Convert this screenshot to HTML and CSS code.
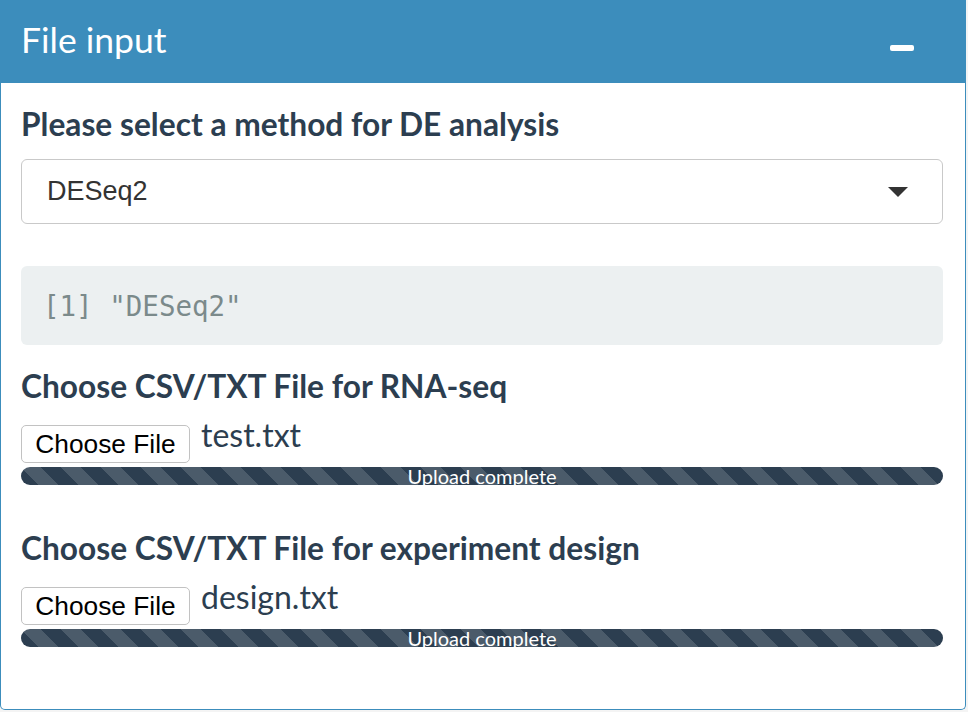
FILE: index.html
```html
<!DOCTYPE html>
<html>
<head>
<meta charset="utf-8">
<title>File input</title>
<link rel="stylesheet" href="styles.css">
</head>
<body>
<div class="box">
  <div class="box-header">
    <h3 class="box-title">File input</h3>
    <button class="box-tool" type="button" aria-label="Collapse"><span class="minus"></span></button>
  </div>
  <div class="box-body">
    <label class="control-label label-method">Please select a method for DE analysis</label>
    <div class="select">
      <span class="select-value">DESeq2</span>
      <span class="select-caret"></span>
    </div>
    <pre class="output">[1] "DESeq2"</pre>

    <div class="file-group">
      <label class="control-label">Choose CSV/TXT File for RNA-seq</label>
      <div class="file-row">
        <button class="file-btn" type="button">Choose File</button>
        <span class="file-name">test.txt</span>
      </div>
      <div class="progress"><div class="progress-bar" style="width:100%">Upload complete</div></div>
    </div>

    <div class="file-group second">
      <label class="control-label">Choose CSV/TXT File for experiment design</label>
      <div class="file-row">
        <button class="file-btn" type="button">Choose File</button>
        <span class="file-name">design.txt</span>
      </div>
      <div class="progress"><div class="progress-bar" style="width:100%">Upload complete</div></div>
    </div>
  </div>
</div>
</body>
</html>
```

FILE: styles.css
```css
* { box-sizing: border-box; }

html, body {
  margin: 0;
  padding: 0;
  background: #f4f4f4;
}

body {
  font-family: Lato, "Open Sans", sans-serif;
  color: #2c3e50;
}

.box {
  width: 966px;
  background: #fff;
  border: 1px solid #3c8dbc;
  border-top: 0;
  border-radius: 0 0 5px 5px;
}

.box-header {
  height: 83px;
  background: #3c8dbc;
  display: flex;
  align-items: center;
  justify-content: space-between;
  padding: 0 51px 0 20px;
}

.box-title {
  margin: -4px 0 0 0;
  font-size: 35.5px;
  font-weight: 400;
  line-height: 42px;
  color: #fff;
}

.box-tool {
  background: none;
  border: 0;
  padding: 0;
  margin: 13px 0 0 0;
  display: flex;
}

.minus {
  display: block;
  width: 24px;
  height: 6px;
  border-radius: 2px;
  background: #fff;
}

.box-body {
  padding: 24px 22px 62px 20px;
}

.control-label {
  display: block;
  font-size: 31.7px;
  font-weight: 700;
  line-height: 35px;
  color: #2c3e50;
  white-space: nowrap;
}

.select {
  margin-top: 17px;
  height: 65px;
  border: 1px solid #c9c9c9;
  border-radius: 6px;
  background: #fff;
  display: flex;
  align-items: center;
  justify-content: space-between;
  padding: 0 34px 0 25px;
}

.select-value {
  font-family: "Liberation Sans", Arial, sans-serif;
  font-size: 27px;
  color: #333;
}

.select-caret {
  width: 0;
  height: 0;
  border-left: 10px solid transparent;
  border-right: 10px solid transparent;
  border-top: 10px solid #333;
}

.output {
  margin: 42px 0 0 0;
  height: 79px;
  background: #ecf0f1;
  border-radius: 6px;
  padding: 0 22px;
  display: flex;
  align-items: center;
  font-family: "DejaVu Sans Mono", "Liberation Mono", monospace;
  font-size: 27.5px;
  color: #7b8a8b;
}

.file-group {
  margin-top: 24px;
}

.file-group.second {
  margin-top: 46px;
}

.file-row {
  margin-top: 21px;
  display: flex;
  align-items: flex-start;
  gap: 11px;
}

.file-btn {
  width: 169px;
  height: 38px;
  padding: 0;
  background: #fff;
  border: 1px solid #c2c2c2;
  border-radius: 5px;
  font-family: "Liberation Sans", Arial, sans-serif;
  font-size: 26.3px;
  color: #000;
}

.file-name {
  font-size: 32px;
  line-height: 30px;
  margin-top: -5px;
  color: #2c3e50;
}

.progress {
  margin-top: 4px;
  height: 18px;
}

.progress-bar {
  height: 18px;
  border-radius: 9px;
  background-color: #2c3e50;
  background-image: linear-gradient(45deg,
    rgba(255,255,255,.15) 25%, transparent 25%,
    transparent 50%, rgba(255,255,255,.15) 50%,
    rgba(255,255,255,.15) 75%, transparent 75%, transparent);
  background-size: 40px 40px;
  color: #fff;
  text-align: center;
  font-size: 20px;
  line-height: 18px;
}
```
